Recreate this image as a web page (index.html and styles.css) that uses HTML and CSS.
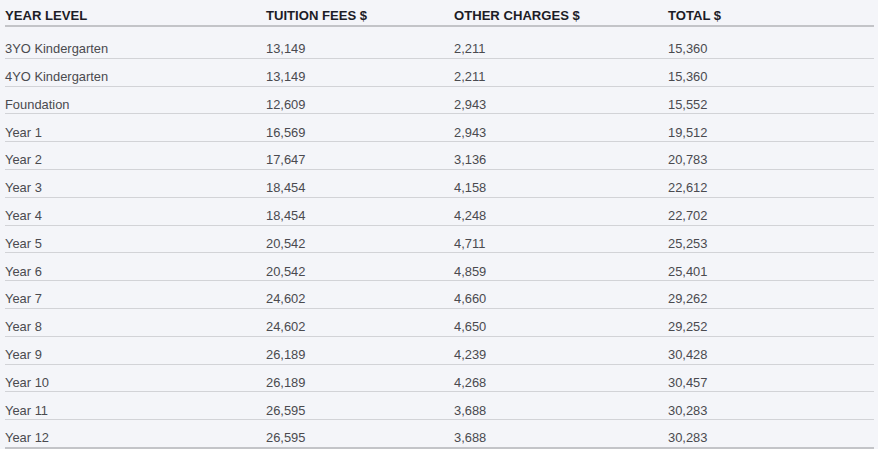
FILE: index.html
```html
<!DOCTYPE html>
<html lang="en">
<head>
<meta charset="utf-8">
<title>Fees</title>
<link rel="stylesheet" href="styles.css">
</head>
<body>
<div class="fees">
  <div class="row head">
    <div>YEAR LEVEL</div><div>TUITION FEES $</div><div>OTHER CHARGES $</div><div>TOTAL $</div>
  </div>
  <div class="row first"><div>3YO Kindergarten</div><div>13,149</div><div>2,211</div><div>15,360</div></div>
  <div class="row"><div>4YO Kindergarten</div><div>13,149</div><div>2,211</div><div>15,360</div></div>
  <div class="row"><div>Foundation</div><div>12,609</div><div>2,943</div><div>15,552</div></div>
  <div class="row"><div>Year 1</div><div>16,569</div><div>2,943</div><div>19,512</div></div>
  <div class="row"><div>Year 2</div><div>17,647</div><div>3,136</div><div>20,783</div></div>
  <div class="row"><div>Year 3</div><div>18,454</div><div>4,158</div><div>22,612</div></div>
  <div class="row"><div>Year 4</div><div>18,454</div><div>4,248</div><div>22,702</div></div>
  <div class="row"><div>Year 5</div><div>20,542</div><div>4,711</div><div>25,253</div></div>
  <div class="row"><div>Year 6</div><div>20,542</div><div>4,859</div><div>25,401</div></div>
  <div class="row"><div>Year 7</div><div>24,602</div><div>4,660</div><div>29,262</div></div>
  <div class="row"><div>Year 8</div><div>24,602</div><div>4,650</div><div>29,252</div></div>
  <div class="row"><div>Year 9</div><div>26,189</div><div>4,239</div><div>30,428</div></div>
  <div class="row"><div>Year 10</div><div>26,189</div><div>4,268</div><div>30,457</div></div>
  <div class="row"><div>Year 11</div><div>26,595</div><div>3,688</div><div>30,283</div></div>
  <div class="row last"><div>Year 12</div><div>26,595</div><div>3,688</div><div>30,283</div></div>
</div>
</body>
</html>
```

FILE: styles.css
```css
html, body {
  margin: 0;
  padding: 0;
  background: #f4f5f9;
}
body {
  font-family: "Liberation Sans", Arial, sans-serif;
  overflow: hidden;
}
.fees {
  width: 869px;
  margin-left: 5px;
}
.row {
  display: grid;
  grid-template-columns: 261px 188px 214px 1fr;
  font-size: 12.9px;
  line-height: 15px;
  color: #4a4a4f;
  padding: 10.3px 0 1.5px 0;
  border-bottom: 1px solid #d2d3d7;
}
.row.head {
  font-size: 13.1px;
  font-weight: bold;
  color: #1c1c26;
  line-height: 16px;
  padding: 8px 0 1px 0;
  border-bottom: 2px solid #c3c4c8;
}
.row.first {
  padding-top: 14.3px;
}
.row.last {
  border-bottom: 2px solid #c3c4c8;
}
```
